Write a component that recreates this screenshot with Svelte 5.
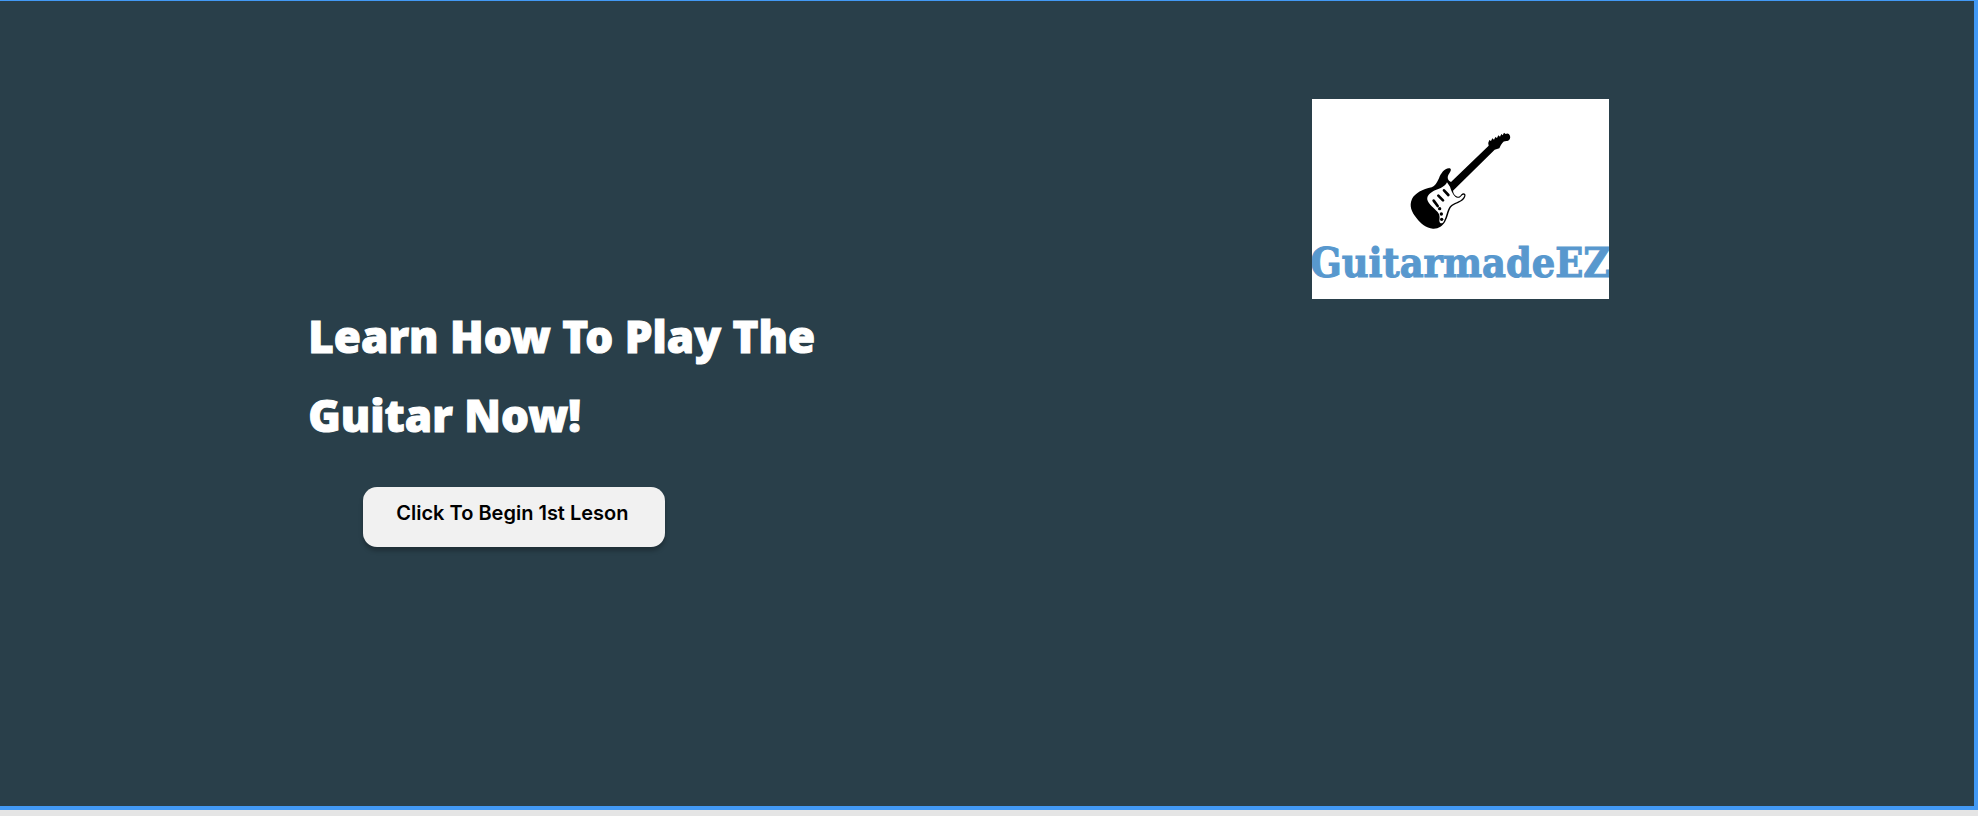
<script>
  const title = 'Learn How To Play The Guitar Now!';
  const action = 'Click To Begin 1st Leson';
</script>

<main class="hero">
  <section class="intro">
    <h1>{title}</h1>
    <button type="button">{action}</button>
  </section>
  <section class="brand">
    <div class="logo">
      <svg class="guitar" viewBox="0 0 360 330" aria-hidden="true">
        <path d="M150 130C155 133 152 139 149 143C142 152 141 160 147 167L153 171L266 62Q263 53 268 45L273 48L277 40L282 44L286 36L291 39L295 31L300 35L304 27L308 31L312 23L317 27Q326 23 330 32Q333 43 322 48Q310 47 307 54Q301 61 298 70L284 74L159 197C160 206 166 214 174 215C182 216 182 207 190 205C199 205 198 215 192 222C184 233 162 236 153 247C145 258 144 277 135 291C128 302 115 312 99 311C78 310 62 296 50 280C34 260 27 242 36 222C45 205 68 192 95 187C105 183 111 173 117 160C122 145 135 127 150 130Z" />
        <path class="guard" d="M141 172L150 185C155 201 163 217 173 218C183 220 184 209 190 209C195 209 193 214 189 219C181 231 160 232 150 244C141 255 140 274 131 290C126 298 119 296 118 287C120 274 119 266 109 257C95 242 86 236 82 224C80 211 93 202 105 196C122 190 135 184 141 172Z" />
        <path class="pickups" d="M132 196L145 210M115 212L129 226M101 227L113 243" />
        <circle cx="119" cy="251" r="5" />
        <circle cx="124" cy="267" r="5" />
        <circle cx="125" cy="283" r="5" />
      </svg>
      <span class="name">GuitarmadeEZ</span>
    </div>
  </section>
</main>

<style>
  :global(body) {
    background: #e5e5e5;
  }

  .hero {
    box-sizing: border-box;
    display: grid;
    grid-template-columns: 66.45% 1fr;
    min-height: calc(100vh - 6px);
    border: solid #4299f5;
    border-width: 1px 4px 4px 0;
    background: #293f4a;
  }

  .intro {
    display: flex;
    flex-direction: column;
    align-items: flex-start;
    padding: 296px 24px 48px 23.5%;
  }

  h1 {
    max-width: 520px;
    margin: 0;
    color: #fff;
    font: 900 44px/79px "Noto Sans", sans-serif;
    -webkit-text-stroke: 1px #fff;
  }

  button {
    margin: 32px 0 0 55px;
    padding: 12px 36px 20px 33px;
    border: 0;
    border-radius: 14px;
    background: #f1f1f1;
    box-shadow: 0 4px 4px rgb(0 0 0 / 25%);
    color: #000;
    font: 600 20px/28px Inter, sans-serif;
    cursor: pointer;
  }

  .brand {
    padding: 98px 0 48px;
  }

  .logo {
    box-sizing: border-box;
    display: flex;
    flex-direction: column;
    align-items: center;
    width: 297px;
    height: 200px;
    padding-top: 26px;
    overflow: hidden;
    background: #fff;
  }

  .guitar {
    width: 120px;
    height: 110px;
    flex: none;
  }

  .guard {
    fill: #fff;
  }

  .pickups {
    fill: none;
    stroke: #000;
    stroke-width: 8;
    stroke-linecap: round;
  }

  .name {
    color: #5898ce;
    font: 700 41px/56px "DejaVu Serif Condensed", "DejaVu Serif", serif;
    -webkit-text-stroke: 1px #5898ce;
    white-space: nowrap;
  }
</style>
